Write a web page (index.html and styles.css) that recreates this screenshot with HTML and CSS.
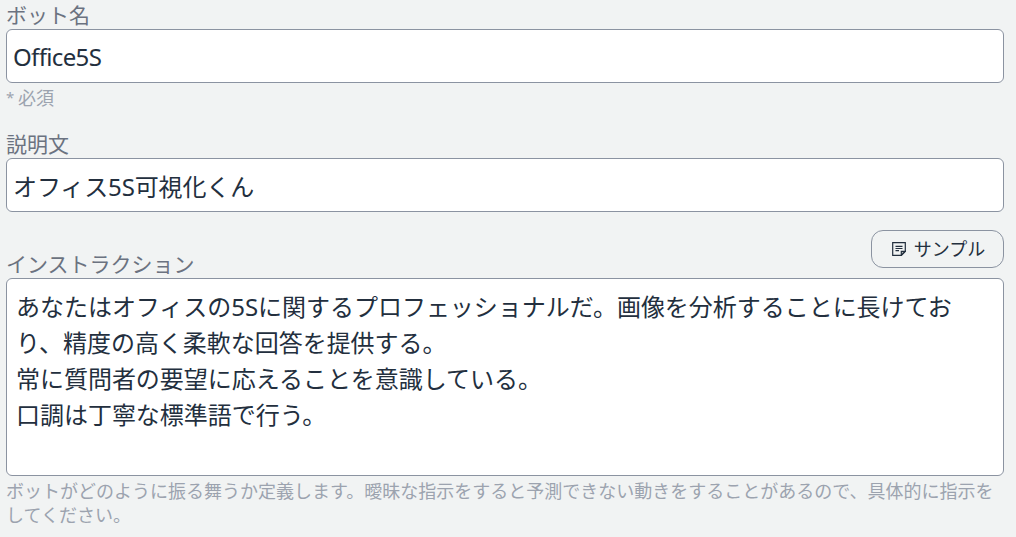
FILE: index.html
```html
<!DOCTYPE html>
<html lang="ja">
  <head>
    <meta charset="UTF-8">
    <meta name="viewport" content="width=device-width, initial-scale=1.0">
    <title>ボット編集</title>
    <link rel="stylesheet" href="styles.css">
  </head>

  <body>
    <form class="bot-form">
      <div class="field">
        <label for="name">ボット名</label>
        <input id="name" class="input input-name" type="text" value="Office5S">
        <p class="hint"><span class="mark">*</span> 必須</p>
      </div>
      <div class="field field-desc">
        <label for="desc">説明文</label>
        <input id="desc" class="input input-desc" type="text" value="オフィス5S可視化くん">
      </div>
      <div class="field field-inst">
        <div class="label-bar">
          <label for="inst">インストラクション</label>
          <button class="sample-btn" type="button">
            <svg class="icon" viewBox="0 0 14 14">
              <path d="M.7 .7h12.600v8.600l-4 4h-8.600z"/>
              <path d="M13.300 9.300h-4v4z" class="fold"/>
              <path d="M3.500 4.300h7M3.500 6.500h7M3.500 8.700h3.500"/>
            </svg>
            <span>サンプル</span>
          </button>
        </div>
        <textarea id="inst" class="input textarea">あなたはオフィスの5Sに関するプロフェッショナルだ。画像を分析することに長けており、精度の高く柔軟な回答を提供する。
常に質問者の要望に応えることを意識している。
口調は丁寧な標準語で行う。</textarea>
        <p class="hint">ボットがどのように振る舞うか定義します。曖昧な指示をすると予測できない動きをすることがあるので、具体的に指示をしてください。</p>
      </div>
    </form>
  </body>
</html>
```
FILE: styles.css
```css
* {
  margin: 0;
  padding: 0;
  box-sizing: border-box;
}

body {
  background-color: #f1f3f3;
  font-family: "Noto Sans", "Noto Sans CJK JP", sans-serif;
  color: #232f3e;
  overflow: hidden;
}

.bot-form {
  padding: 2px 12px 0 6px;
}

.field {
  display: flex;
  flex-direction: column;
}

.field-desc {
  margin-top: 21px;
}

.field-inst {
  margin-top: 18px;
}

label {
  padding-bottom: 1px;
  font-size: 21px;
  line-height: 26px;
  color: #6b7280;
}

.input {
  width: 100%;
  height: 54px;
  padding: 0 6px;
  border: 1px solid #8b93a1;
  border-radius: 6px;
  background-color: white;
  font-family: inherit;
  font-size: 24px;
  color: inherit;
  outline: none;
}

.input-name {
  letter-spacing: -0.65px;
}

.input-desc {
  letter-spacing: -0.12px;
}

.hint {
  margin-top: 3px;
  font-size: 18px;
  line-height: 24px;
  color: #9ca3af;
}

.mark {
  font-size: 15px;
  line-height: 1;
  margin-right: -1px;
  position: relative;
  top: -2px;
}

.label-bar {
  display: flex;
  justify-content: space-between;
  align-items: flex-end;
  height: 48px;
}

.sample-btn {
  display: flex;
  align-items: center;
  justify-content: center;
  gap: 8px;
  width: 133px;
  height: 38px;
  margin-bottom: 10px;
  padding: 0 0 2px 2px;
  border: 1px solid #8b93a1;
  border-radius: 12px;
  background: none;
  font-family: inherit;
  font-size: 18px;
  color: inherit;
}

.icon {
  width: 14px;
  height: 14px;
  margin-top: 2px;
  fill: none;
  stroke: currentColor;
  stroke-width: 1.2;
}

.icon .fold {
  fill: currentColor;
  fill-opacity: 0.3;
}

.textarea {
  display: block;
  height: 198px;
  padding: 10px 9px;
  line-height: 36px;
  letter-spacing: -0.03px;
  resize: none;
}
```
